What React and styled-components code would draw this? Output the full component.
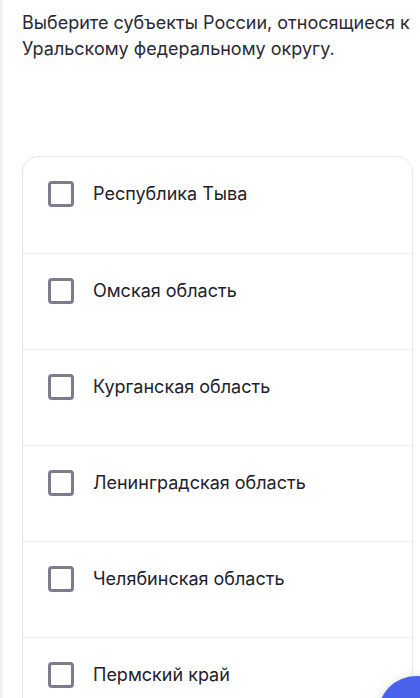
import React from "react";
import styled, { createGlobalStyle } from "styled-components";

const options = [
	"Республика Тыва",
	"Омская область",
	"Курганская область",
	"Ленинградская область",
	"Челябинская область",
	"Пермский край",
];

const GlobalStyle = createGlobalStyle`
	html, body {
		margin: 0;
		padding: 0;
		background: #ffffff;
		overflow: hidden;
	}
	body {
		font-family: Inter, "Noto Sans", sans-serif;
		-webkit-font-smoothing: antialiased;
	}
`;

const Page = styled.div`
	position: relative;
	height: 698px;
	overflow: hidden;
	padding: 10px 7px 0 22px;
	box-sizing: border-box;
	border-left: 3px solid #f2f2f4;
`;

const Question = styled.h1`
	margin: 0 0 0 -3px;
	font-size: 18px;
	line-height: 26px;
	font-weight: 400;
	color: #2a2a35;
`;

const Card = styled.div`
	margin: 94px 0 0 -3px;
	border: 1px solid #e8e8ec;
	border-radius: 16px;
	background: #ffffff;
	display: flex;
	flex-direction: column;
`;

const Row = styled.label`
	display: flex;
	align-items: flex-start;
	gap: 19px;
	height: 96px;
	box-sizing: border-box;
	padding: 24px 24px 0 25px;
	cursor: pointer;

	& + & {
		border-top: 1px solid #ebebef;
	}
`;

const Box = styled.span`
	flex: none;
	width: 26px;
	height: 26px;
	box-sizing: border-box;
	border: 3px solid #7d7c8f;
	border-radius: 4px;
	background: #ffffff;
`;

const Label = styled.span`
	font-size: 18px;
	line-height: 26px;
	color: #22222c;
`;

const Fab = styled.div`
	position: absolute;
	right: -34px;
	bottom: -54px;
	width: 76px;
	height: 76px;
	border-radius: 50%;
	background: #4b63ec;
	box-shadow: 0 2px 10px rgba(40, 50, 120, 0.25);
`;

export default function App() {
	return (
		<>
			<GlobalStyle />
			<Page>
				<Question>
					Выберите субъекты России, относящиеся к Уральскому
					федеральному округу.
				</Question>
				<Card>
					{options.map((name) => (
						<Row key={name}>
							<Box />
							<Label>{name}</Label>
						</Row>
					))}
				</Card>
				<Fab />
			</Page>
		</>
	);
}
